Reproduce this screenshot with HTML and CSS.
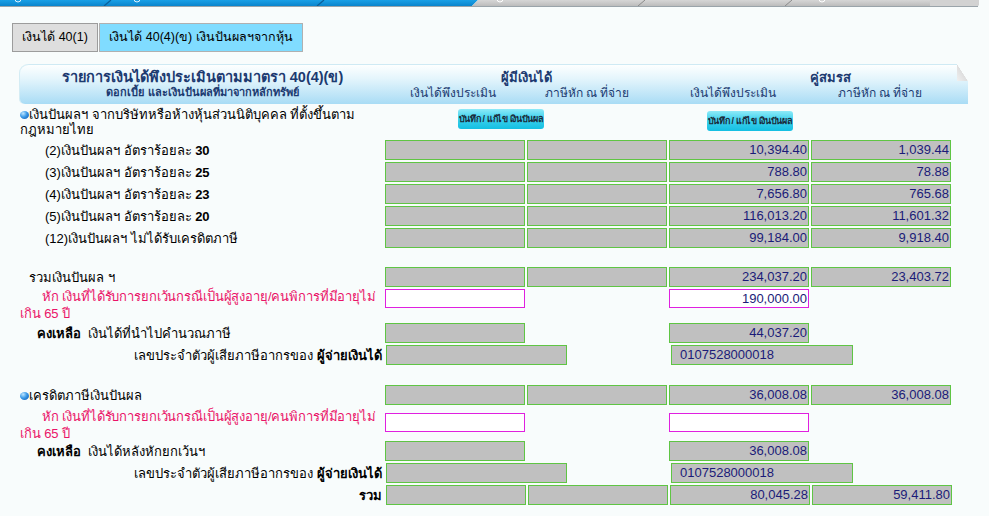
FILE: index.html
```html
<!DOCTYPE html>
<html lang="th">
<head>
<meta charset="utf-8">
<title>เงินได้ 40(4)(ข)</title>
<link rel="stylesheet" href="styles.css">
</head>
<body>
<div class="topbar">
  <svg width="989" height="8" viewBox="0 0 989 8" xmlns="http://www.w3.org/2000/svg">
    <defs>
      <linearGradient id="gb" x1="0" y1="0" x2="0" y2="1">
        <stop offset="0" stop-color="#1aa0e6"/>
        <stop offset="1" stop-color="#0a84cc"/>
      </linearGradient>
      <linearGradient id="gg" x1="0" y1="0" x2="0" y2="1">
        <stop offset="0" stop-color="#d6d6d6"/>
        <stop offset="1" stop-color="#bcbcbc"/>
      </linearGradient>
    </defs>
    <rect x="0" y="0" width="989" height="8" fill="#f8fcfc"/>
    <polygon points="0,0 478,0 472,6 0,6" fill="url(#gb)"/>
    <polygon points="478,0 979,0 979,5 977,6 472,6" fill="url(#gg)"/>
    <polygon points="930,0 979,0 979,5 977,6 930,6" fill="#d2d2d2"/>
    <line x1="111" y1="0" x2="104" y2="6" stroke="#0a5f9a" stroke-width="1.2"/>
    <line x1="324" y1="0" x2="317" y2="6" stroke="#0a5f9a" stroke-width="1.2"/>
    <line x1="645" y1="0" x2="638" y2="6" stroke="#8a8a8a" stroke-width="1"/>
    <line x1="792" y1="0" x2="785" y2="6" stroke="#8a8a8a" stroke-width="1"/>
    <line x1="0" y1="6.5" x2="978" y2="6.5" stroke="#9aa4aa" stroke-width="1"/>
    <circle cx="18" cy="-1" r="3" fill="none" stroke="#dff2ff" stroke-width="1"/>
    <circle cx="137" cy="-1" r="3" fill="none" stroke="#dff2ff" stroke-width="1"/>
    <circle cx="500" cy="-1" r="3" fill="none" stroke="#ffffff" stroke-width="1"/>
    <circle cx="822" cy="-1" r="3" fill="none" stroke="#ffffff" stroke-width="1"/>
  </svg>
</div>

<div class="tabs">
  <div class="tab">เงินได้ 40(1)</div>
  <div class="tab active">เงินได้ 40(4)(ข) เงินปันผลฯจากหุ้น</div>
</div>

<div class="header">
  <div class="h-title">
    <div class="t1">รายการเงินได้พึงประเมินตามมาตรา 40(4)(ข)</div>
    <div class="t2">ดอกเบี้ย และเงินปันผลที่มาจากหลักทรัพย์</div>
  </div>
  <div class="h-grp g-self">
    <div class="g-name">ผู้มีเงินได้</div>
    <div class="g-subs"><span class="s1">เงินได้พึงประเมิน</span><span class="s2">ภาษีหัก ณ ที่จ่าย</span></div>
  </div>
  <div class="h-grp g-spouse">
    <div class="g-name">คู่สมรส</div>
    <div class="g-subs"><span class="s1">เงินได้พึงประเมิน</span><span class="s2">ภาษีหัก ณ ที่จ่าย</span></div>
  </div>
</div>

<div class="content">
  <div class="sec-head">
    <div class="sec-label"><span class="bullet"></span>เงินปันผลฯ จากบริษัทหรือห้างหุ้นส่วนนิติบุคคล ที่ตั้งขึ้นตาม<br>กฎหมายไทย</div>
    <div class="btn b1">บันทึก / แก้ไข เงินปันผล</div>
    <div class="btn b2">บันทึก / แก้ไข เงินปันผล</div>
  </div>

  <div class="row">
    <div class="lbl item">(2)เงินปันผลฯ อัตราร้อยละ <b>30</b></div>
    <div class="cell"></div><div class="cell"></div><div class="cell">10,394.40</div><div class="cell">1,039.44</div>
  </div>
  <div class="row">
    <div class="lbl item">(3)เงินปันผลฯ อัตราร้อยละ <b>25</b></div>
    <div class="cell"></div><div class="cell"></div><div class="cell">788.80</div><div class="cell">78.88</div>
  </div>
  <div class="row">
    <div class="lbl item">(4)เงินปันผลฯ อัตราร้อยละ <b>23</b></div>
    <div class="cell"></div><div class="cell"></div><div class="cell">7,656.80</div><div class="cell">765.68</div>
  </div>
  <div class="row">
    <div class="lbl item">(5)เงินปันผลฯ อัตราร้อยละ <b>20</b></div>
    <div class="cell"></div><div class="cell"></div><div class="cell">116,013.20</div><div class="cell">11,601.32</div>
  </div>
  <div class="row">
    <div class="lbl item">(12)เงินปันผลฯ ไม่ได้รับเครดิตภาษี</div>
    <div class="cell"></div><div class="cell"></div><div class="cell">99,184.00</div><div class="cell">9,918.40</div>
  </div>

  <div class="row total-row">
    <div class="lbl sum">รวมเงินปันผล ฯ</div>
    <div class="cell"></div><div class="cell"></div><div class="cell">234,037.20</div><div class="cell">23,403.72</div>
  </div>
  <div class="row ex-row ex1">
    <div class="lbl ex">หัก เงินที่ได้รับการยกเว้นกรณีเป็นผู้สูงอายุ/คนพิการที่มีอายุไม่<br>เกิน 65 ปี</div>
    <div class="cell input"></div><div class="cell blank"></div><div class="cell input">190,000.00</div>
  </div>
  <div class="row">
    <div class="lbl remain"><b>คงเหลือ</b>&nbsp; เงินได้ที่นำไปคำนวณภาษี</div>
    <div class="cell"></div><div class="cell blank"></div><div class="cell">44,037.20</div>
  </div>
  <div class="row">
    <div class="lbl right">เลขประจำตัวผู้เสียภาษีอากรของ <b>ผู้จ่ายเงินได้</b></div>
    <div class="cell wide"></div><div class="cell wide second">0107528000018</div>
  </div>

  <div class="row credit-row">
    <div class="lbl"><span class="bullet"></span>เครดิตภาษีเงินปันผล</div>
    <div class="cell"></div><div class="cell"></div><div class="cell">36,008.08</div><div class="cell">36,008.08</div>
  </div>
  <div class="row ex-row ex2">
    <div class="lbl ex">หัก เงินที่ได้รับการยกเว้นกรณีเป็นผู้สูงอายุ/คนพิการที่มีอายุไม่<br>เกิน 65 ปี</div>
    <div class="cell input"></div><div class="cell blank"></div><div class="cell input"></div>
  </div>
  <div class="row">
    <div class="lbl remain"><b>คงเหลือ</b>&nbsp; เงินได้หลังหักยกเว้นฯ</div>
    <div class="cell"></div><div class="cell blank"></div><div class="cell">36,008.08</div>
  </div>
  <div class="row">
    <div class="lbl right">เลขประจำตัวผู้เสียภาษีอากรของ <b>ผู้จ่ายเงินได้</b></div>
    <div class="cell wide"></div><div class="cell wide second">0107528000018</div>
  </div>
  <div class="row">
    <div class="lbl right"><b>รวม</b></div>
    <div class="cell"></div><div class="cell"></div><div class="cell">80,045.28</div><div class="cell">59,411.80</div>
  </div>
</div>
</body>
</html>
```

FILE: styles.css
```css
html, body {
  margin: 0;
  padding: 0;
  background: #f8fcfc;
}
body {
  font-family: Tahoma, "Liberation Sans", "Noto Sans", sans-serif;
  font-size: 13px;
  color: #000;
  width: 989px;
  height: 516px;
  overflow: hidden;
}
.topbar {
  height: 8px;
  line-height: 0;
}
.topbar svg { display: block; }

.tabs {
  display: flex;
  margin: 15px 0 0 12px;
  height: 29px;
}
.tab {
  box-sizing: border-box;
  height: 29px;
  line-height: 27px;
  border: 1px solid #9c9c9c;
  background: #dedede;
  font-size: 12.5px;
  text-align: center;
  width: 86px;
}
.tab.active {
  width: 204px;
  margin-left: 1px;
  background: #80dcff;
  border-color: #b0b0b0;
}

.header {
  position: relative;
  margin: 12px 0 0 20px;
  width: 948px;
  height: 40px;
  box-sizing: border-box;
  display: flex;
  color: #1c3a70;
  border-radius: 9px 0 0 5px;
  background: linear-gradient(to bottom, #fdffff 0%, #e4f5fc 35%, #a9dcf5 100%);
  border-top: 1px solid #cfeaf4;
  box-shadow: -1px 0 0 #d4ecf4;
}
.header::after {
  content: "";
  position: absolute;
  top: -1px;
  right: 0;
  width: 11px;
  height: 17px;
  background: linear-gradient(to bottom left, #f8fcfc 50%, #dedede 52%, #f0f0f0 100%);
}
.h-title {
  width: 365px;
  text-align: center;
  padding-top: 4px;
}
.t1 {
  font-size: 14.5px;
  font-weight: bold;
  line-height: 17px;
}
.t2 {
  font-size: 11px;
  font-weight: bold;
  line-height: 13px;
}
.h-grp {
  padding-top: 5px;
}
.g-name {
  font-size: 13px;
  font-weight: bold;
  line-height: 15px;
  text-align: center;
}
.g-subs {
  display: flex;
  font-size: 12px;
  line-height: 16px;
}
.g-subs span { text-align: center; }
.g-self { width: 282px; }
.g-self .s1 { width: 136px; }
.g-self .s2 { width: 124px; margin-left: 4px; }
.g-spouse { width: 301px; }
.g-spouse .g-name { width: 326px; }
.g-spouse .s1 { width: 132px; }
.g-spouse .s2 { width: 162px; }

.content {
  margin-left: 20px;
  width: 950px;
}
.sec-head {
  display: flex;
  height: 32px;
  margin-top: 3px;
}
.sec-label {
  width: 365px;
  line-height: 15px;
  white-space: nowrap;
}
.bullet {
  display: inline-block;
  width: 9px;
  height: 8px;
  border-radius: 50%;
  background: radial-gradient(circle at 35% 30%, #bfe6ff 0%, #3a9ae8 45%, #0b4fa8 100%);
  margin-right: 0;
  vertical-align: 0;
}
.btn {
  box-sizing: border-box;
  width: 86px;
  height: 20px;
  line-height: 20px;
  font-size: 9px;
  font-weight: 600;
  letter-spacing: -0.35px;
  text-align: center;
  color: #1a2a3a;
  border-radius: 3px;
  background: linear-gradient(to bottom, #8eeaf8 0%, #3fd2ee 45%, #14bfe2 100%);
  white-space: nowrap;
  overflow: hidden;
}
.b1 { margin-left: 73px; margin-top: 2px; }
.b2 { margin-left: 163px; margin-top: 4px; }

.row {
  display: flex;
  align-items: center;
  height: 22px;
}
.lbl {
  width: 365px;
  flex: none;
  white-space: nowrap;
}
.item { padding-left: 25px; box-sizing: border-box; }
.sum { padding-left: 9px; box-sizing: border-box; }
.remain { padding-left: 17px; box-sizing: border-box; }
.right { text-align: right; padding-right: 4px; box-sizing: border-box; width: 366px; }

.cell {
  box-sizing: border-box;
  flex: none;
  width: 140px;
  height: 20px;
  margin-right: 2px;
  background: #c0c0c0;
  border: 1px solid #5fc544;
  font-family: "Liberation Sans", Tahoma, sans-serif;
  font-size: 13px;
  line-height: 18px;
  color: #1b1b78;
  text-align: right;
  padding-right: 1px;
}
.cell.blank {
  visibility: hidden;
}
.cell.input {
  background: #ffffff;
  border-color: #e020e0;
  height: 19px;
  line-height: 17px;
}
.cell.wide {
  width: 181px;
  height: 20px;
  text-align: left;
  padding-left: 8px;
}
.cell.wide.second {
  margin-left: 102px;
  width: 182px;
}

.total-row { margin-top: 17px; }
.credit-row { margin-top: 18px; }

.ex-row {
  height: 34px;
  align-items: flex-start;
}
.ex {
  color: #ea1368;
  line-height: 17px;
  text-indent: 22px;
  letter-spacing: -0.12px;
}
.ex1 .ex { padding-top: 0; }
.ex1 .cell { margin-top: 1px; }
.ex2 .ex { padding-top: 2px; }
.ex2 .cell { margin-top: 7px; }
```
